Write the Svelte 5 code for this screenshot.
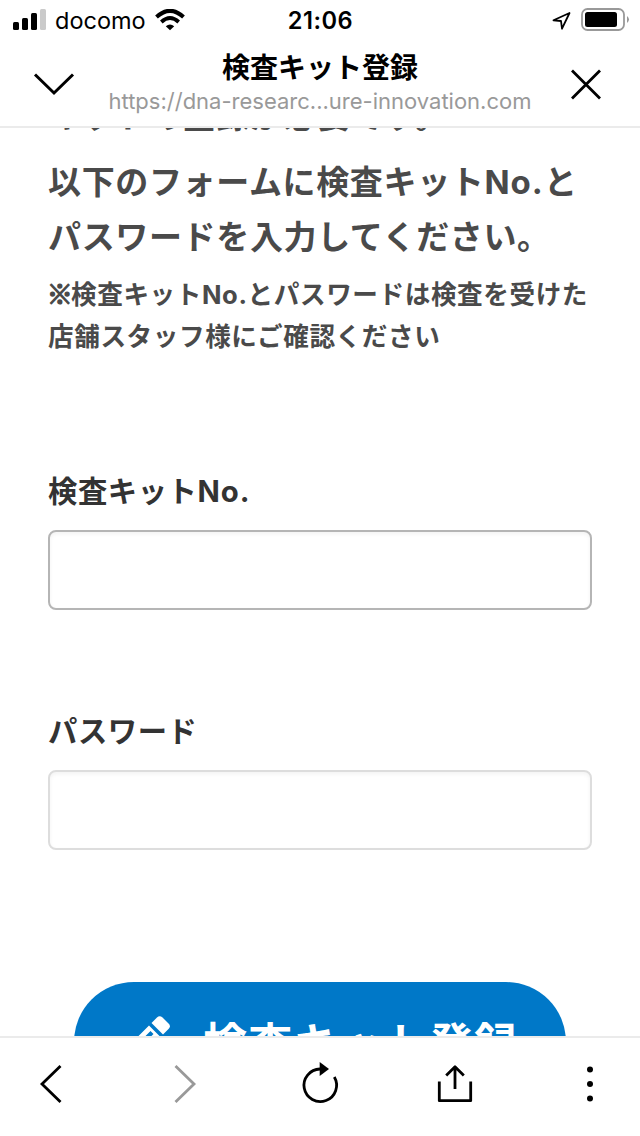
<script>
  let kitNo = $state('');
  let password = $state('');
</script>

<div class="screen">
  <header>
    <div class="status">
      <div class="carrier">
        <svg class="signal" width="34" height="22" viewBox="0 0 34 22">
          <rect x="0" y="13" width="6" height="8" rx="1.5" />
          <rect x="9" y="9" width="6" height="12" rx="1.5" />
          <rect x="18" y="4" width="6" height="17" rx="1.5" />
          <rect x="27" y="0" width="6" height="21" rx="1.5" fill="#cacaca" />
        </svg>
        <span>docomo</span>
        <svg class="wifi" width="30" height="22" viewBox="0 0 30 22">
          <path d="M1.5 8 Q15 -4.4 28.5 8" fill="none" stroke="#000" stroke-width="4" />
          <path d="M6.3 13 Q15 5 23.7 13" fill="none" stroke="#000" stroke-width="3.8" />
          <path d="M10.8 17.2 Q15 13.6 19.2 17.2 L15 21.3Z" />
        </svg>
      </div>
      <time>21:06</time>
      <div class="power">
        <svg width="19" height="20" viewBox="0 0 19 20">
          <path d="M1.5 10.3 17.5 3 10 18.7 9 11Z" fill="none" stroke="#000" stroke-width="1.8" stroke-linejoin="round" />
        </svg>
        <svg width="49" height="24" viewBox="0 0 49 24">
          <rect x="1" y="1" width="42" height="21" rx="5.5" fill="none" stroke="#999" stroke-width="1.8" />
          <rect x="4" y="4" width="32" height="15" rx="2.5" />
          <path d="M46 8Q50 11.5 46 15Z" fill="#999" />
        </svg>
      </div>
    </div>
    <div class="nav">
      <button aria-label="閉じる">
        <svg width="42" height="26" viewBox="0 0 42 26"><path d="M2 2.5 21 21 40 2.5" fill="none" stroke="#000" stroke-width="3" /></svg>
      </button>
      <div class="heading">
        <h1>検査キット登録</h1>
        <p>https://dna-researc...ure-innovation.com</p>
      </div>
      <button aria-label="終了">
        <svg width="32" height="32" viewBox="0 0 32 32"><path d="M2 1.5 30 29.5M30 1.5 2 29.5" fill="none" stroke="#000" stroke-width="2.8" /></svg>
      </button>
    </div>
  </header>

  <main>
    <p class="lead intro">キットの登録が必要です。</p>
    <p class="lead">以下のフォームに検査キット<b>No.</b>と<br />パスワードを入力してください。</p>
    <p class="note"><span class="mark">※</span>検査キット<b>No.</b>とパスワードは検査を受けた<br />店舗スタッフ様にご確認ください</p>
    <label class="kit"><span>検査キット<b>No.</b></span><input bind:value={kitNo} /></label>
    <label class="pass"><span>パスワード</span><input type="password" bind:value={password} /></label>
    <button class="submit">
      <svg width="44" height="44" viewBox="0 0 44 44" fill="#fff">
        <path d="M31 1.5Q33.5-1 36.5 1.5L43 8Q45 10.5 42.5 13L37 18.5 25.5 7Z" />
        <path fill-rule="evenodd" d="M23 9.5 34.5 21 13 42 1 44 3 29.5ZM24.5 15 8 31.5 11 34.5 27.5 18Z" />
      </svg>
      <span>検査キット登録</span>
    </button>
  </main>

  <footer>
    <svg viewBox="0 0 48 48"><path d="M34.5 6 16 24 34.5 42" fill="none" stroke="#000" stroke-width="2.8" /></svg>
    <svg viewBox="0 0 48 48"><path d="M14.5 6 33 24 14.5 42" fill="none" stroke="#999" stroke-width="2.8" /></svg>
    <svg viewBox="0 0 48 48">
      <path d="M24 9A16.3 16.3 0 1 0 38.3 17" fill="none" stroke="#000" stroke-width="2.8" />
      <path d="M23.7 2 33 9 23.7 16Z" />
    </svg>
    <svg viewBox="0 0 48 48">
      <path d="M8.3 21.5V40.7H39.7V21.5M24 29V7M15.2 15.5 24 6.8 32.8 15.5" fill="none" stroke="#000" stroke-width="2.8" stroke-linejoin="round" />
    </svg>
    <svg viewBox="0 0 48 48"><circle cx="24" cy="9.5" r="3" /><circle cx="24" cy="24" r="3" /><circle cx="24" cy="38.5" r="3" /></svg>
  </footer>
</div>

<style>
  :global(body) { margin: 0; background: #fff; }
  * { box-sizing: border-box; }
  .screen {
    width: 640px; height: 1136px; overflow: hidden; background: #fff;
    display: grid; grid-template-rows: 128px 908px 100px;
    font-family: Inter, "Noto Sans CJK JP", sans-serif;
  }
  svg { display: block; }
  h1, p { margin: 0; }
  button { border: 0; padding: 0; background: none; font-family: inherit; }
  header { border-bottom: 2px solid #ebebeb; display: flex; flex-direction: column; }
  .status {
    height: 40px; padding: 0 10px 0 13px;
    display: grid; grid-template-columns: 1fr auto 1fr; align-items: center;
  }
  .carrier, .power { display: flex; align-items: center; }
  .carrier { font-size: 23.5px; letter-spacing: 0; }
  .signal { margin-right: 8px; }
  .wifi { margin-left: 9px; }
  time { font-size: 23.6px; font-weight: 600; letter-spacing: 0.5px; padding: 1px 2px 0 0; }
  .power { justify-content: flex-end; gap: 10px; }
  .nav { flex: 1; display: grid; grid-template-columns: 42px 1fr 32px; padding: 0 38px 0 33px; }
  .nav button { align-self: center; margin-top: 3px; }
  .heading { text-align: center; white-space: nowrap; padding: 6px 5px 0 0; }
  h1 { font: 700 28px/40px "Noto Sans CJK JP", sans-serif; }
  .heading p { color: #999; font-size: 22px; line-height: 26px; letter-spacing: 0; margin-top: 2px; }
  main {
    overflow: hidden; padding: 0 48px; color: #4a4a4a;
    font-family: "Noto Sans CJK JP", sans-serif; font-weight: 700;
    display: flex; flex-direction: column; white-space: nowrap;
  }
  main > * { flex: none; }
  b { font-family: Inter, sans-serif; font-weight: 700; line-height: 0; }
  .lead { font-size: 33px; line-height: 54.4px; letter-spacing: 0.65px; }
  .lead b { letter-spacing: 1px; }
  .intro { margin: -41px 0 12px; }
  .note { margin-top: 10px; font-size: 25.6px; line-height: 41.6px; letter-spacing: 0.6px; }
  .mark {
    display: inline-block; width: 23px; line-height: 0; text-indent: -1px;
    letter-spacing: 0; -webkit-text-stroke: 1.4px currentColor;
  }
  label { display: flex; flex-direction: column; color: #333; font-size: 29.3px; line-height: 48px; letter-spacing: 0.6px; }
  label b { letter-spacing: 1px; }
  .kit { margin-top: 109.6px; }
  .pass { margin-top: 95px; }
  label { padding-bottom: 0; }
  input {
    height: 80px; margin-top: 17px; border: 2px solid #ddd; border-radius: 8px;
    background: #fff; box-shadow: inset 0 2px 4px #0000000d; outline: none;
  }
  .kit input { border-color: #b5b5b5; }
  .submit {
    width: 492px; height: 120px; margin: 132px auto 0; border-radius: 60px;
    background: #0078c8; color: #fff; display: flex; padding: 0 0 3px 52px;
    align-items: center; gap: 33px; font: 700 44px/60px "Noto Sans CJK JP", sans-serif; letter-spacing: 1.2px;
  }
  .submit svg { margin-top: -5px; }
  footer {
    border-top: 2px solid #ebebeb; background: #fff; padding: 22px 26px 0;
    display: flex; justify-content: space-between; align-items: flex-start;
  }
  footer svg { width: 48px; height: 48px; }
</style>
